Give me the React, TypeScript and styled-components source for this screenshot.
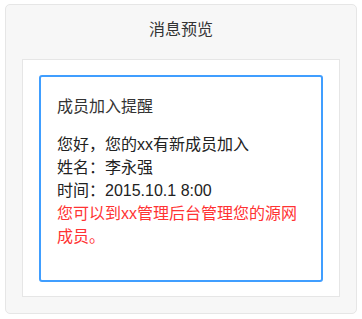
import React from "react";
import styled, { createGlobalStyle } from "styled-components";

const Global = createGlobalStyle`
  html, body { margin: 0; padding: 0; background: #ffffff; }
  body {
    padding: 4px 5px;
    font-family: "Liberation Sans", "Noto Sans CJK SC", sans-serif;
    color: #333333;
  }
`;

const Panel = styled.section`
  box-sizing: border-box;
  width: 352px;
  background: #f7f7f7;
  border: 1px solid #e6e6e6;
  border-radius: 5px;
  padding: 0 16px 16px;
`;

const PanelTitle = styled.h2`
  margin: 0;
  padding: 13px 0 17px;
  font-size: 16px;
  line-height: 24px;
  font-weight: normal;
  text-align: center;
  color: #333333;
`;

const Preview = styled.div`
  background: #ffffff;
  border: 1px solid #e6e6e6;
  padding: 15px 16px 14px;
`;

const Message = styled.div`
  border: 2px solid #409eff;
  border-radius: 3px;
  padding: 18px 16px 32px;
  font-size: 16px;
  line-height: 23px;
`;

const MessageTitle = styled.div`
  color: #333333;
  margin-bottom: 15px;
`;

const Line = styled.div<{ $tone?: "normal" | "alert" }>`
  color: ${(p) => (p.$tone === "alert" ? "#ff3333" : "#222222")};
`;

export default function App() {
  return (
    <>
      <Global />
      <Panel>
        <PanelTitle>消息预览</PanelTitle>
        <Preview>
          <Message>
            <MessageTitle>成员加入提醒</MessageTitle>
            <Line>您好，您的xx有新成员加入</Line>
            <Line>姓名：李永强</Line>
            <Line>时间：2015.10.1 8:00</Line>
            <Line $tone="alert">您可以到xx管理后台管理您的源网成员。</Line>
          </Message>
        </Preview>
      </Panel>
    </>
  );
}
